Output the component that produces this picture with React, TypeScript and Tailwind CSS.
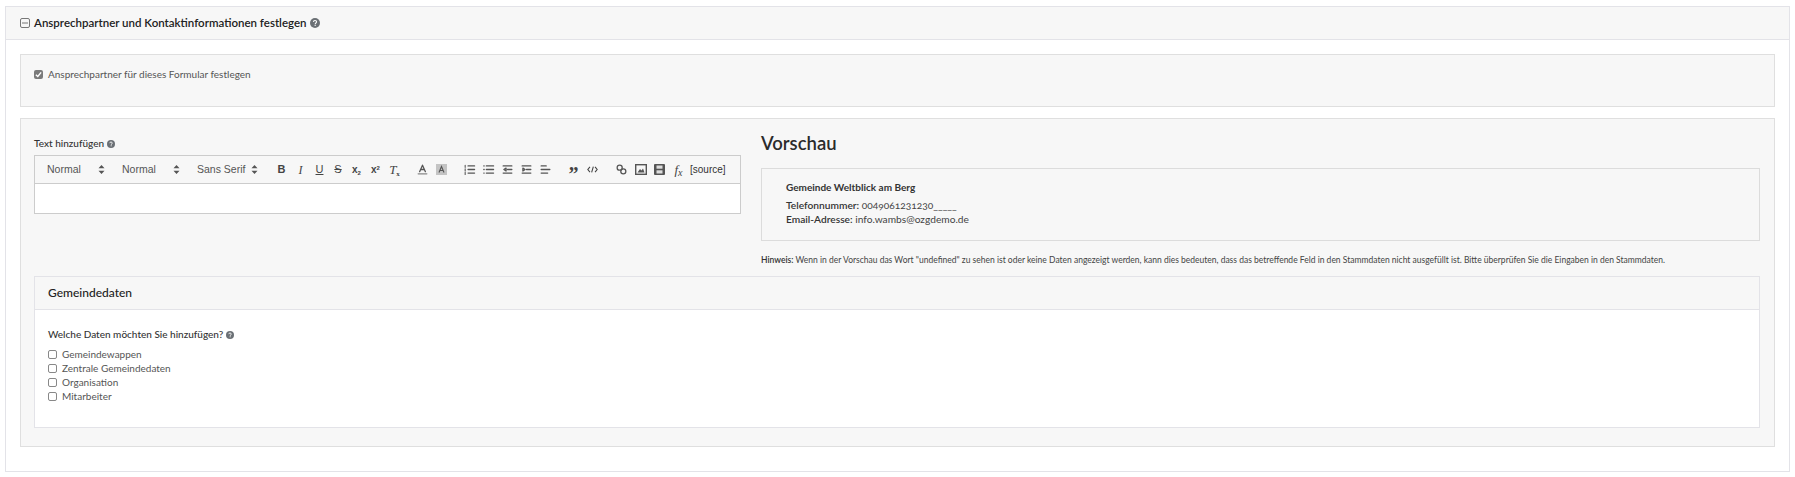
import React from "react";

const Help = ({ s = 10, gap = "ml-[3px]" }: { s?: number; gap?: string }) => (
  <svg width={s} height={s} viewBox="0 0 12 12" className={`inline-block shrink-0 ${gap}`}>
    <circle cx="6" cy="6" r="6" fill="#6b7075" />
    <path d="M4.1 4.7C4.2 3.6 5 3 6 3c1.1 0 1.9.6 1.9 1.6 0 1.4-1.6 1.3-1.6 2.6" fill="none" stroke="#fff" strokeWidth="1.3" />
    <rect x="5.5" y="8" width="1.5" height="1.4" fill="#fff" />
  </svg>
);

const Box = ({ children }: { children: React.ReactNode }) => (
  <svg width="13" height="13" viewBox="0 0 18 18" className="block" fill="none" stroke="#555" strokeWidth="1.8" strokeLinecap="round" strokeLinejoin="round">
    {children}
  </svg>
);

const Select = ({ label, w }: { label: string; w: string }) => (
  <div className={`flex items-center justify-between text-[11px] text-[#555] pl-3 ${w}`}>
    <span className="font-['Liberation_Sans',sans-serif] text-[10.5px]">{label}</span>
    <svg width="7" height="9" viewBox="0 0 7 9"><path d="M3.5 0 6.5 3.3H.5zM3.5 9 .5 5.7h6z" fill="#555" /></svg>
  </div>
);

const Tool = ({ children, w = "w-[19px]" }: { children: React.ReactNode; w?: string }) => (
  <div className={`flex justify-center items-center h-4 ${w}`}>{children}</div>
);

const Check = ({ label }: { label: string }) => (
  <label className="flex items-center h-[14px] text-[10px] text-[#555]">
    <span className="w-[9px] h-[9px] border border-[#888] rounded-[2px] bg-white mr-[5px]" />
    {label}
  </label>
);

export default function App() {
  return (
    <div className="bg-white h-[477px] overflow-hidden pt-[6px] px-[5px] font-['Lato','Noto_Sans',sans-serif]">
      <div className="border border-[#e3e3e8] h-[466px]">
        <div className="bg-[#f7f7f7] border-b border-[#e3e3e8] h-[33px] flex items-center pl-[14px] text-[11.5px] text-[#222] font-semibold">
          <svg width="10" height="10" viewBox="0 0 10 10" className="mr-[4px]" fill="none" stroke="#777">
            <rect x=".5" y=".5" width="9" height="9" rx="1.5" />
            <path d="M2 5h6" />
          </svg>
          Ansprechpartner und Kontaktinformationen festlegen
          <Help />
        </div>
        <div className="px-[14px] pt-[14px]">
          <div className="bg-[#f7f7f7] border border-[#dfdfdf] h-[53px] pl-[13px] pt-[12px] mb-[11px]">
            <label className="flex items-center text-[10px] text-[#555]">
              <span className="w-[9px] h-[9px] rounded-[2px] bg-[#7a7a7a] mr-[5px] flex items-center justify-center">
                <svg width="7" height="7" viewBox="0 0 8 8"><path d="M1 4.2 3.2 6.3 7 1.5" fill="none" stroke="#fff" strokeWidth="1.6" /></svg>
              </span>
              Ansprechpartner für dieses Formular festlegen
            </label>
          </div>
          <div className="bg-[#f7f7f7] border border-[#dfdfdf] h-[329px] pl-[13px] pr-[14px] pt-[18px]">
            <div className="flex h-[118px]">
              <div className="w-[707px] shrink-0">
                <div className="h-[13px] flex items-center text-[10px] text-[#333] font-medium">Text hinzufügen<Help s={8} /></div>
                <div className="mt-[5px] border border-[#ccc]">
                  <div className="h-[28px] flex items-center border-b border-[#ccc]">
                    <Select label="Normal" w="w-[75px] pr-[5px]" />
                    <Select label="Normal" w="w-[75px] pr-[5px]" />
                    <Select label="Sans Serif" w="w-[77px] pr-[4px]" />
                    <div className="w-[10px]" />
                    <Tool><span className="font-['Liberation_Sans',sans-serif] font-bold text-[11px] text-[#444]">B</span></Tool>
                    <Tool><span className="font-['Liberation_Serif',serif] italic text-[12px] text-[#444]">I</span></Tool>
                    <Tool><span className="font-['Liberation_Sans',sans-serif] underline text-[11px] text-[#444]">U</span></Tool>
                    <Tool w="w-[18px]"><span className="font-['Liberation_Sans',sans-serif] line-through text-[11px] text-[#444]">S</span></Tool>
                    <Tool><span className="font-['Liberation_Sans',sans-serif] font-bold text-[10px] text-[#444]">x<sub className="text-[6px]">2</sub></span></Tool>
                    <Tool><span className="font-['Liberation_Sans',sans-serif] font-bold text-[10px] text-[#444]">x<sup className="text-[6px]">2</sup></span></Tool>
                    <Tool><span className="font-['Liberation_Serif',serif] italic text-[13px] text-[#444]">T<sub className="text-[7px] not-italic font-bold">x</sub></span></Tool>
                    <div className="w-[9px]" />
                    <Tool><Box><path d="M5 12 9 3l4 9M6.5 9h5" /><path d="M3 15h12" stroke="#888" /></Box></Tool>
                    <Tool><svg width="11" height="11" viewBox="0 0 11 11"><rect width="11" height="11" fill="#c4c4c4" /><path d="M3 8.5 5.5 2.5 8 8.5M4 6.5h3" fill="none" stroke="#555" strokeWidth="1.1" /></svg></Tool>
                    <div className="w-[9px]" />
                    <Tool><Box><path d="M7 4h9M7 9h9M7 14h9" /><path d="M3 3v3M3 8v3M3 13v3" strokeWidth="1.5" /></Box></Tool>
                    <Tool><Box><path d="M6 4h10M6 9h10M6 14h10M2.5 4h.5M2.5 9h.5M2.5 14h.5" /></Box></Tool>
                    <Tool><Box><path d="M3 4h12M9 9h6M3 14h12M7 7 4 9l3 2z" /></Box></Tool>
                    <Tool><Box><path d="M3 4h12M9 9h6M3 14h12M4 7l3 2-3 2z" /></Box></Tool>
                    <Tool><Box><path d="M3 4h7M3 9h12M3 14h9" /></Box></Tool>
                    <div className="w-[9px]" />
                    <Tool><span className="font-['Liberation_Serif',serif] font-bold text-[20px] leading-none text-[#444] mt-[9px]">”</span></Tool>
                    <Tool><svg width="11" height="9" viewBox="0 0 13 10" fill="none" stroke="#444" strokeWidth="1.3"><path d="M3.5 2 1 5l2.5 3M9.5 2 12 5 9.5 8M7.5 1.5l-2 7" /></svg></Tool>
                    <div className="w-[10px]" />
                    <Tool><Box><circle cx="6.5" cy="6.5" r="3.5" /><circle cx="11.5" cy="11.5" r="3.5" /></Box></Tool>
                    <Tool><svg width="12" height="11" viewBox="0 0 12 11"><rect x=".7" y=".7" width="10.6" height="9.6" fill="none" stroke="#555" strokeWidth="1.4" /><path d="M2.5 8.5 5 5l1.5 1.5L8 4.5l1.5 4z" fill="#555" /></svg></Tool>
                    <Tool><svg width="11" height="11" viewBox="0 0 11 11"><rect width="11" height="11" rx="1" fill="#555" /><rect x="2.5" y="1.5" width="6" height="3.2" fill="#ddd" /><rect x="2.5" y="6.3" width="6" height="3.2" fill="#ddd" /></svg></Tool>
                    <Tool><span className="font-['Liberation_Serif',serif] italic text-[13px] leading-none text-[#444]">f<span className="text-[10px] relative top-[2px]">x</span></span></Tool>
                    <span className="ml-[2px] font-['Liberation_Sans',sans-serif] text-[10px] text-[#333]">[source]</span>
                  </div>
                  <div className="h-[29px] bg-white" />
                </div>
              </div>
              <div className="ml-[20px] flex-1 -mt-[6px]">
                <h2 className="text-[18.5px] leading-[24px] font-semibold text-[#2b2b2b]">Vorschau</h2>
                <div className="mt-[13px] h-[73px] border border-[#dcdcdc] px-6 pt-[11px] text-[10.2px] text-[#444]">
                  <div className="font-bold text-[10px] text-[#333] leading-[14px]">Gemeinde Weltblick am Berg</div>
                  <div className="leading-[14px] mt-[4px] oldstyle-nums"><b className="font-semibold text-[#333]">Telefonnummer:</b> 0049061231230_____</div>
                  <div className="leading-[14px]"><b className="font-semibold text-[#333]">Email-Adresse:</b> info.wambs@ozgdemo.de</div>
                </div>
                <p className="mt-[13px] text-[8.5px] leading-[12px] text-[#444] whitespace-nowrap"><b className="font-semibold text-[#333]">Hinweis:</b> Wenn in der Vorschau das Wort "undefined" zu sehen ist oder keine Daten angezeigt werden, kann dies bedeuten, dass das betreffende Feld in den Stammdaten nicht ausgefüllt ist. Bitte überprüfen Sie die Eingaben in den Stammdaten.</p>
              </div>
            </div>
            <div className="border border-[#e3e3e8] mt-[21px] h-[152px] bg-white">
              <div className="bg-[#f7f7f7] border-b border-[#e3e3e8] h-[33px] flex items-center pl-[13px] pb-[1px] text-[12px] text-[#222] font-medium">Gemeindedaten</div>
              <div className="pl-[13px] pt-[18px]">
                <div className="flex items-center h-[13px] text-[10px] text-[#333] font-medium mb-[6px]">Welche Daten möchten Sie hinzufügen?<Help s={8} /></div>
                <Check label="Gemeindewappen" />
                <Check label="Zentrale Gemeindedaten" />
                <Check label="Organisation" />
                <Check label="Mitarbeiter" />
              </div>
            </div>
          </div>
        </div>
      </div>
    </div>
  );
}
